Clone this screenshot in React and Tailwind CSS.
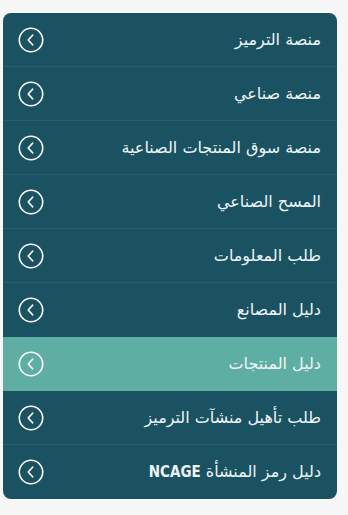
import React from "react";

const items = [
  "منصة الترميز",
  "منصة صناعي",
  "منصة سوق المنتجات الصناعية",
  "المسح الصناعي",
  "طلب المعلومات",
  "دليل المصانع",
  "دليل المنتجات",
  "طلب تأهيل منشآت الترميز",
  null,
];

function ChevronCircle() {
  return (
    <svg width="26" height="26" viewBox="0 0 26 26" fill="none" className="shrink-0">
      <circle cx="13" cy="13" r="11.7" stroke="white" strokeWidth="1.6" />
      <path d="M14.6 8.2 L10.2 13 L14.6 17.8" stroke="white" strokeWidth="1.7" strokeLinecap="round" strokeLinejoin="round" />
    </svg>
  );
}

export default function App() {
  return (
    <div className="min-h-[515px] w-[348px] bg-[#f7f7f7] pt-[13px]">
      <div className="ml-[3px] w-[334px] overflow-hidden rounded-[8px] bg-[#1a5262]">
        {items.map((t, i) => {
          const active = i === 6;
          const last = i === items.length - 1;
          return (
            <div
              key={i}
              dir="rtl"
              className={
                "flex h-[54px] items-center justify-between pr-[16px] pl-[15px] " +
                (active ? "bg-[#5eaea3] " : "") +
                (!last && !active && i !== 5 ? "border-b border-[#245f6f] " : "") +
                (i === 5 ? "border-b border-[#1a5262] " : "")
              }
            >
              <span
                className="text-[16px] leading-none text-[#eef5f7]"
                style={{ fontFamily: '"DejaVu Sans", sans-serif' }}
              >
                {t === null ? (
                  <>
                    دليل رمز المنشأة{" "}
                    <span
                      className="text-[15px] font-semibold"
                      style={{ fontFamily: '"DejaVu Sans Condensed", "DejaVu Sans", sans-serif' }}
                    >
                      NCAGE
                    </span>
                  </>
                ) : (
                  t
                )}
              </span>
              <ChevronCircle />
            </div>
          );
        })}
      </div>
    </div>
  );
}
